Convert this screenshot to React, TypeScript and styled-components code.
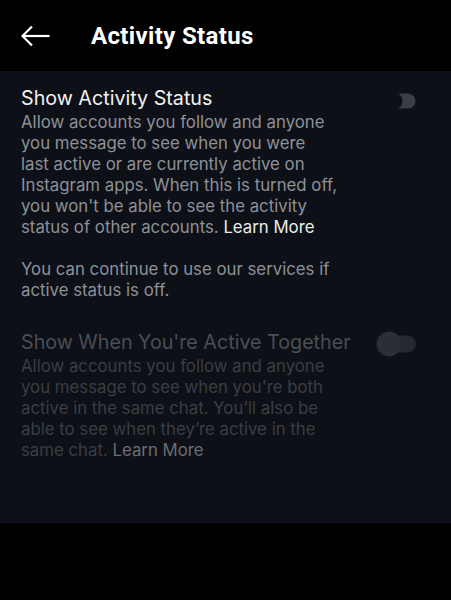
import React from 'react';
import styled, { createGlobalStyle } from 'styled-components';

const GlobalStyle = createGlobalStyle`
  html, body {
    margin: 0;
    padding: 0;
    background: #000;
  }
  body {
    font-family: Inter, "Noto Sans", sans-serif;
    -webkit-font-smoothing: antialiased;
  }
`;

const Screen = styled.div`
  width: 451px;
  height: 600px;
  background: #000;
  display: flex;
  flex-direction: column;
`;

const Header = styled.header`
  height: 71px;
  display: flex;
  align-items: center;
  padding-left: 21px;
  box-sizing: border-box;
`;

const BackButton = styled.button`
  background: none;
  border: none;
  padding: 0;
  width: 29px;
  height: 24px;
  display: flex;
  align-items: center;
  cursor: pointer;
`;

const Title = styled.h1`
  margin: 0 0 0 41px;
  font-family: Roboto, "Liberation Sans", sans-serif;
  font-weight: 700;
  font-size: 24px;
  color: #fff;
  letter-spacing: 0.35px;
`;

const Panel = styled.main`
  height: 452px;
  background: #0d1016;
  padding: 15px 34px 0 21px;
  box-sizing: border-box;
`;

const Section = styled.section<{ $disabled?: boolean }>`
  display: flex;
  align-items: flex-start;
  justify-content: space-between;
  margin-bottom: ${({ $disabled }) => ($disabled ? '0' : '29px')};
`;

const TextBlock = styled.div`
  white-space: nowrap;
`;

const SectionTitle = styled.h2<{ $disabled?: boolean }>`
  margin: 0 0 2px;
  font-weight: 400;
  font-size: 19.7px;
  line-height: 24px;
  color: ${({ $disabled }) => ($disabled ? '#4a4e55' : '#f2f2f2')};
`;

const Description = styled.p<{ $disabled?: boolean }>`
  margin: 0;
  font-size: 16.8px;
  line-height: 21px;
  color: ${({ $disabled }) => ($disabled ? '#3a3e45' : '#8d9199')};
  & + & {
    margin-top: 21px;
  }
`;

const LearnMore = styled.span<{ $disabled?: boolean }>`
  color: ${({ $disabled }) => ($disabled ? '#6a6e74' : '#ececec')};
`;

const Toggle = styled.div<{ $offset: number }>`
  margin-top: ${({ $offset }) => $offset}px;
  display: flex;
`;

const Bottom = styled.div`
  flex: 1;
  background: #000;
`;

const App: React.FC = () => {
  return (
    <Screen>
      <GlobalStyle />
      <Header>
        <BackButton aria-label="Back">
          <svg width="29" height="22" viewBox="0 0 29 22" fill="none">
            <path d="M1.5 11H28.5" stroke="#fff" strokeWidth="2.2" />
            <path d="M11 1.5L1.5 11L11 20.5" stroke="#fff" strokeWidth="2.2" strokeLinejoin="miter" />
          </svg>
        </BackButton>
        <Title>Activity Status</Title>
      </Header>
      <Panel>
        <Section>
          <TextBlock>
            <SectionTitle>Show Activity Status</SectionTitle>
            <Description>
              Allow accounts you follow and anyone
              <br />
              you message to see when you were
              <br />
              last active or are currently active on
              <br />
              Instagram apps. When this is turned off,
              <br />
              you won't be able to see the activity
              <br />
              status of other accounts. <LearnMore>Learn More</LearnMore>
            </Description>
            <Description>
              You can continue to use our services if
              <br />
              active status is off.
            </Description>
          </TextBlock>
          <Toggle $offset={7}>
            <svg width="22" height="16" viewBox="0 0 22 16">
              <path d="M13 0.5A7.5 7.5 0 0 1 13 15.5H3A8.5 8.5 0 0 0 3 0.5Z" fill="#3b3e44" />
            </svg>
          </Toggle>
        </Section>
        <Section $disabled>
          <TextBlock>
            <SectionTitle $disabled>Show When You're Active Together</SectionTitle>
            <Description $disabled>
              Allow accounts you follow and anyone
              <br />
              you message to see when you're both
              <br />
              active in the same chat. You’ll also be
              <br />
              able to see when they’re active in the
              <br />
              same chat. <LearnMore $disabled>Learn More</LearnMore>
            </Description>
          </TextBlock>
          <Toggle $offset={1}>
            <svg width="41" height="26" viewBox="0 0 41 26">
              <rect x="12" y="4.5" width="28" height="17" rx="8.5" fill="#25282e" />
              <circle cx="13" cy="13" r="12.5" fill="#2b2e34" />
            </svg>
          </Toggle>
        </Section>
      </Panel>
      <Bottom />
    </Screen>
  );
};

export default App;
